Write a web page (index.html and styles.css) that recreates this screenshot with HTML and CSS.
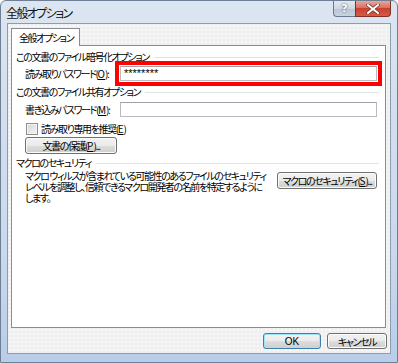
FILE: index.html
```html
<html>
<head>
<meta charset="utf-8"/>
<title>全般オプション</title>
<link rel="stylesheet" href="styles.css">
</head>
<body>

<div class="window">
	<div class="titlebar">
		<span class="title">全般オプション</span>
		<div class="caption">
			<span class="help">?</span>
			<span class="close">
				<svg width="14" height="10" viewBox="0 0 14 10">
					<path d="M2 1 L12 9 M12 1 L2 9" stroke="#6b2a22" stroke-width="3.4" stroke-linecap="square"/>
					<path d="M2 1 L12 9 M12 1 L2 9" stroke="#fff" stroke-width="2" stroke-linecap="square"/>
				</svg>
			</span>
		</div>
	</div>

	<div class="client">
		<div class="tabs"><div class="tab">全般オプション</div></div>
		<div class="panel">
			<!-- encryption -->
			<div class="grouphead">この文書のファイル暗号化オプション</div>
			<div class="row r1">
				<span class="lbl">読み取りパスワード(<u>O</u>):</span>
				<span class="txt mark">********</span>
			</div>

			<!-- sharing -->
			<div class="grouphead g2">この文書のファイル共有オプション</div>
			<div class="row r2">
				<span class="lbl">書き込みパスワード(<u>M</u>):</span>
				<span class="txt"></span>
			</div>
			<div class="row chk">
				<span class="box"></span>
				<span>読み取り専用を推奨(<u>E</u>)</span>
			</div>
			<div class="row">
				<span class="btn protect">文書の保護(<u>P</u>)...</span>
			</div>

			<!-- macro -->
			<div class="grouphead g3">マクロのセキュリティ</div>
			<div class="macro">
				<p>マクロ ウィルスが含まれている可能性のあるファイルのセキュリティ<br>レベルを調整し、信頼できるマクロ開発者の名前を特定するように<br>します。</p>
				<span class="btn macrobtn">マクロのセキュリティ(<u>S</u>)...</span>
			</div>
		</div>
		<div class="footer">
			<span class="btn ok">OK</span>
			<span class="btn cancel">キャンセル</span>
		</div>
	</div>
</div>

</body>
</html>
```

FILE: styles.css
```css
body {
	margin: 0;
	background: #fff;
	font-family: "Noto Sans CJK JP", sans-serif;
	font-size: 10px;
	font-feature-settings: "palt";
	letter-spacing: -1.4px;
	white-space: nowrap;
	color: #000;
}
.window {
	box-sizing: border-box;
	width: 398px;
	height: 363px;
	border: 1px solid #6e7f94;
	border-radius: 6px 6px 0 0;
	background: linear-gradient(#dce6f2, #d3dfee 30%, #c9d9ee 70%, #b9cde8);
	display: flex;
	flex-direction: column;
}
/* title bar */
.titlebar {
	height: 22px;
	display: flex;
	justify-content: space-between;
	padding-left: 5px;
}
.title {
	font-size: 12px;
	letter-spacing: -1.6px;
	line-height: 24px;
	color: #111;
}
.caption {
	display: flex;
	margin-right: 6px;
}
.caption span {
	box-sizing: border-box;
	height: 16px;
	display: flex;
	align-items: center;
	justify-content: center;
	border: 1px solid #6b7a8e;
	border-top: none;
}
.help {
	width: 22px;
	border-radius: 0 0 0 4px;
	background: linear-gradient(#e3e9f1, #cdd6e2 50%, #b9c5d4 51%, #c8d3e0);
	color: #fff;
	font-family: "DejaVu Sans", sans-serif;
	font-weight: bold;
	font-size: 11px;
	letter-spacing: 0;
	text-shadow: 0 0 2px #334;
	border-right: none !important;
}
.close {
	width: 36px;
	border-radius: 0 0 4px 0;
	background: linear-gradient(#e8a89c, #d7705f 45%, #c7432f 50%, #d65a45);
	border-color: #7e3126 !important;
}
/* client */
.client {
	flex: 1;
	margin: 0 6px 8px;
	border: 1px solid #8e9cb0;
	background-color: #f0f0f0;
	background-image: radial-gradient(rgba(255,255,255,.8) 0.6px, transparent 0.9px);
	background-size: 4px 4px;
	padding: 4px 4px 0 3px;
	display: flex;
	flex-direction: column;
}
.tabs {
	display: flex;
}
.tab {
	box-sizing: border-box;
	width: 69px;
	height: 18px;
	margin-bottom: -1px;
	padding-left: 7px;
	line-height: 17px;
	background: #fff;
	border: 1px solid #898c95;
	border-bottom: none;
	position: relative;
}
.panel {
	box-sizing: border-box;
	height: 283px;
	border: 1px solid #898c95;
	background: #fff;
	padding-top: 5px;
}
.grouphead {
	display: flex;
	align-items: center;
	gap: 5px;
	padding-left: 4px;
	margin-right: 6px;
	height: 12px;
	line-height: 12px;
}
.grouphead::after {
	content: "";
	flex: 1;
	border-top: 1px solid #dde3ea;
}
.g2 {
	margin-top: 5px;
}
.g3 {
	margin-top: 3px;
}
.row {
	display: flex;
	align-items: center;
	padding-left: 13px;
}
.r1 {
	margin-top: 3px;
}
.r2 {
	margin-top: 4px;
}
.lbl {
	width: 95px;
}
u {
	text-decoration: underline;
	letter-spacing: 0;
}
.txt {
	box-sizing: border-box;
	width: 257px;
	height: 15px;
	border: 1px solid #b8bcc3;
	border-top-color: #9da1a8;
	padding-left: 3px;
	line-height: 13px;
	font-family: "Liberation Sans", sans-serif;
	font-size: 11px;
	letter-spacing: 0;
}
.mark {
	outline: 4px solid #f00;
	outline-offset: 1px;
}
.chk {
	margin-top: 5px;
	padding-left: 14px;
	gap: 3px;
	height: 13px;
}
.box {
	box-sizing: border-box;
	width: 12px;
	height: 12px;
	border: 1px solid #8f8f8f;
	background: linear-gradient(135deg, #d6d6d6, #f4f4f4);
	box-shadow: inset 0 0 0 1px #f4f4f4;
}
/* buttons */
.btn {
	box-sizing: border-box;
	display: flex;
	align-items: center;
	justify-content: center;
	height: 17px;
	border: 1px solid #707070;
	border-radius: 3px;
	background: linear-gradient(#f2f2f2, #ebebeb 50%, #dddddd 51%, #cfcfcf);
	box-shadow: inset 0 0 0 1px #fbfbfb;
}
.row .protect {
	margin-top: 2px;
	width: 92px;
}
.macro {
	display: flex;
	align-items: flex-start;
	justify-content: space-between;
	padding-left: 13px;
	padding-right: 8px;
}
.macro p {
	margin: 1px 0 0;
	line-height: 11px;
}
.macrobtn {
	margin-top: 3px;
	width: 100px;
}
.footer {
	display: flex;
	justify-content: flex-end;
	gap: 6px;
	margin-top: 5px;
	margin-right: -1px;
}
.footer .btn {
	width: 58px;
	height: 16px;
}
.ok {
	border-color: #3c7fb1 !important;
	box-shadow: inset 0 0 0 1px #9fe4fb !important;
	font-family: "Liberation Sans", sans-serif;
	letter-spacing: 0;
}
.cancel {
	width: 60px !important;
}
```
